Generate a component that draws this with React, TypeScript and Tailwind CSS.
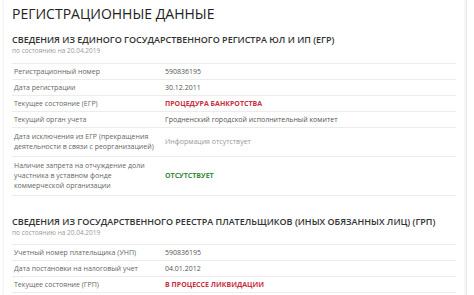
import React from 'react'

type Row = { label: string[]; value: string; tone?: 'red' | 'green' | 'muted'; tall?: boolean }

const egr: Row[] = [
  { label: ['Регистрационный номер'], value: '590836195' },
  { label: ['Дата регистрации'], value: '30.12.2011' },
  { label: ['Текущее состояние (ЕГР)'], value: 'ПРОЦЕДУРА БАНКРОТСТВА', tone: 'red' },
  { label: ['Текущий орган учета'], value: 'Гродненский городской исполнительный комитет' },
  {
    label: ['Дата исключения из ЕГР (прекращения', 'деятельности в связи с реорганизацией)'],
    value: 'Информация отсутствует',
    tone: 'muted',
    tall: true,
  },
  {
    label: ['Наличие запрета на отчуждение доли', 'участника в уставном фонде', 'коммерческой организации'],
    value: 'ОТСУТСТВУЕТ',
    tone: 'green',
    tall: true,
  },
]

const grp: Row[] = [
  { label: ['Учетный номер плательщика (УНП)'], value: '590836195' },
  { label: ['Дата постановки на налоговый учет'], value: '04.01.2012' },
  { label: ['Текущее состояние (ГРП)'], value: 'В ПРОЦЕССЕ ЛИКВИДАЦИИ', tone: 'red' },
  { label: ['Наименование инспекции МНС'], value: 'Инспекция МНС по Ленинскому району г.Гродно' },
]

function Table({ rows }: { rows: Row[] }) {
  return (
    <div className="border-t border-[#ececec]">
      {rows.map((r, i) => (
        <div
          key={i}
          className={`flex items-center border-b border-[#ececec] leading-[10px] ${r.tall ? 'py-[4px]' : 'py-[2.5px]'}`}
        >
          <div className="w-[153px] shrink-0 whitespace-nowrap pl-[2px] text-[#666]">
            {r.label.map((l, j) => (
              <div key={j}>{l}</div>
            ))}
          </div>
          <div
            className={
              r.tone === 'red'
                ? 'font-bold text-[#c9303f]'
                : r.tone === 'green'
                  ? 'font-bold text-[#3a8b3c]'
                  : r.tone === 'muted'
                    ? 'text-[#999]'
                    : 'text-[#555]'
            }
          >
            {r.value}
          </div>
        </div>
      ))}
    </div>
  )
}

export default function App() {
  return (
    <div className="h-[295px] overflow-hidden bg-white pl-[4px] pr-[7px]" style={{ fontFamily: '"Open Sans", sans-serif' }}>
      <div className="h-full border-r border-[#e6e6e6] pr-[2px]">
        <div className="h-full bg-white px-[8px] pt-[5px] text-[7px] shadow-[0_0_3px_rgba(0,0,0,0.12)]">
          <h1 className="text-[14px] leading-[18px] text-[#222]">РЕГИСТРАЦИОННЫЕ ДАННЫЕ</h1>

          <h2 className="mt-[11px] text-[9px] font-semibold leading-[11px] text-[#333]">
            СВЕДЕНИЯ ИЗ ЕДИНОГО ГОСУДАРСТВЕННОГО РЕГИСТРА ЮЛ И ИП (ЕГР)
          </h2>
          <p className="mb-[7px] mt-[1px] text-[6.5px] leading-[10px] text-[#999]">по состоянию на 20.04.2019</p>
          <Table rows={egr} />

          <h2 className="mt-[19.5px] text-[9px] font-semibold leading-[11px] text-[#333]">
            СВЕДЕНИЯ ИЗ ГОСУДАРСТВЕННОГО РЕЕСТРА ПЛАТЕЛЬЩИКОВ (ИНЫХ ОБЯЗАННЫХ ЛИЦ) (ГРП)
          </h2>
          <p className="mb-[6.5px] mt-[1px] text-[6.5px] leading-[10px] text-[#999]">по состоянию на 20.04.2019</p>
          <Table rows={grp} />
        </div>
      </div>
    </div>
  )
}
